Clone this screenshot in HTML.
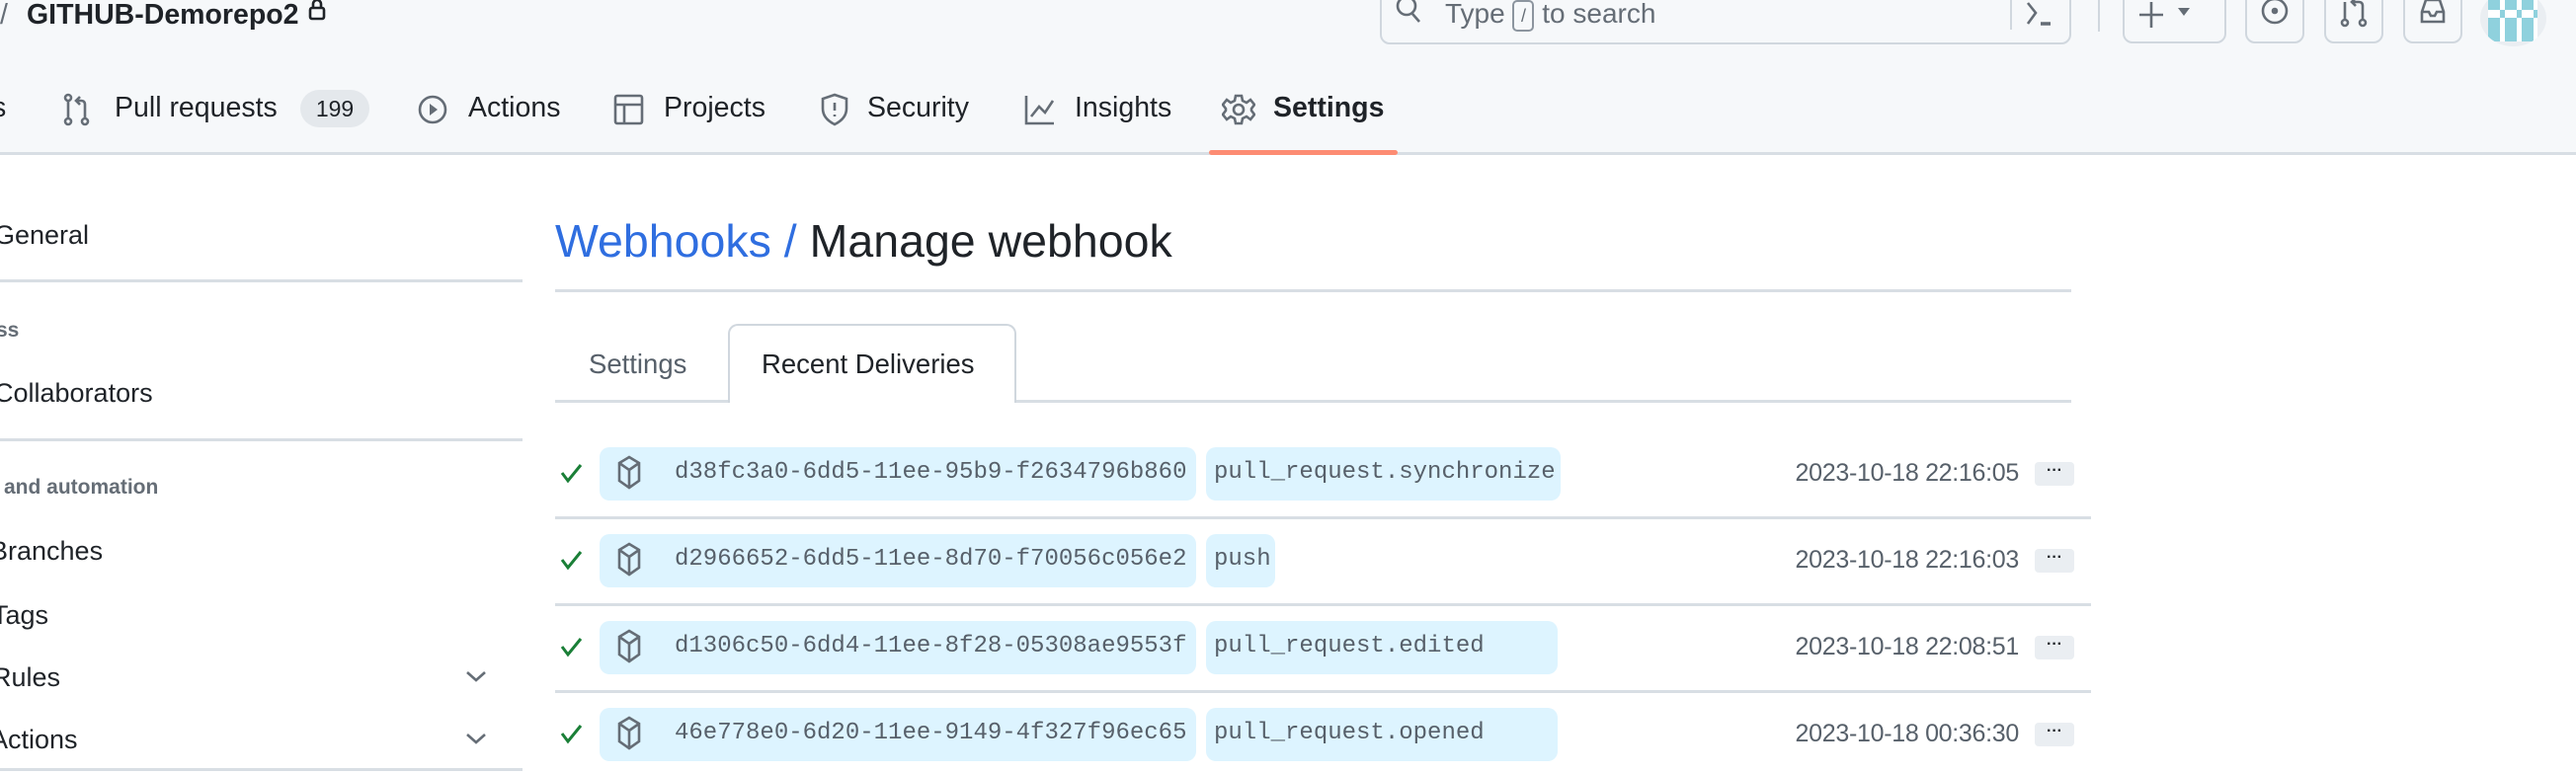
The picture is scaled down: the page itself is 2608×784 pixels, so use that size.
<!DOCTYPE html>
<html><head><meta charset="utf-8"><style>
*{box-sizing:border-box;margin:0;padding:0}
body{width:2608px;height:784px;overflow:hidden;background:#fff;font-family:"Liberation Sans",sans-serif;color:#1f2328;position:relative}
.a{position:absolute;white-space:nowrap}
.hdr{position:absolute;left:0;top:0;width:2608px;height:157px;background:#f6f8fa;border-bottom:3px solid #d8dee4}
.nav{font-size:28.5px;top:91px;line-height:36px}
.ic{position:absolute;stroke:#656d76;fill:none;stroke-width:2.6}
.btn{position:absolute;top:-10px;height:54px;border:2px solid #d0d7de;border-radius:10px;background:#f6f8fa}
.side{font-size:27px;left:-6px}
.sh{font-size:21px;font-weight:bold;color:#656d76}
.hr{position:absolute;height:3px;background:#d8dee4}
.pill{position:absolute;height:54px;background:#ddf4ff;border-radius:10px}
.mono{font-family:"Liberation Mono",monospace;font-size:24px;color:#57606a}
.date{font-size:25px;color:#57606a;letter-spacing:-0.3px}
.dots{position:absolute;width:40px;height:24px;background:#eaeef2;border-radius:4px;font-size:16px;font-weight:bold;text-align:center;line-height:18px;color:#1f2328}
</style></head><body>
<div class="hdr"></div>
<div class="a" style="left:0;top:-3px;font-size:28.5px;line-height:36px;color:#656d76">/</div>
<div class="a" style="left:27px;top:-3px;font-size:28.5px;line-height:36px;font-weight:bold">GITHUB-Demorepo2</div>
<svg class="ic" style="left:312px;top:-2px;stroke:#1f2328" width="18" height="24" viewBox="0 0 18 24"><rect x="2" y="10" width="14" height="11" rx="2"/><path d="M5 10V6a4 4 0 0 1 8 0v4"/></svg>
<!-- search -->
<div class="btn" style="left:1397px;width:700px;top:-12px;height:57px"></div>
<svg class="ic" style="left:1412px;top:-4px" width="28" height="32" viewBox="0 0 28 32"><circle cx="12" cy="10" r="9"/><path d="M18 18l7 8"/></svg>
<div class="a" style="left:1463px;top:-4px;font-size:28px;line-height:36px;color:#656d76">Type <span style="display:inline-block;border:2px solid #8c959f;border-radius:5px;font-size:18px;width:22px;height:32px;text-align:center;line-height:28px;vertical-align:middle">/</span> to search</div>
<div class="a" style="left:2035px;top:0;width:2px;height:30px;background:#d0d7de"></div>
<svg class="ic" style="left:2050px;top:0" width="30" height="28" viewBox="0 0 30 28"><path d="M3 3l8 10-8 11"/><path d="M16 24h10" stroke-width="3.5"/></svg>
<div class="a" style="left:2124px;top:0;width:2px;height:32px;background:#d0d7de"></div>
<div class="btn" style="left:2149px;width:105px"></div>
<svg class="ic" style="left:2165px;top:0" width="60" height="30" viewBox="0 0 60 30"><path d="M13 2v26M1 15h24"/><path d="M40 8h12l-6 8z" fill="#656d76" stroke="none"/></svg>
<div class="btn" style="left:2273px;width:60px"></div>
<svg class="ic" style="left:2288px;top:-4px" width="30" height="34" viewBox="0 0 30 34"><circle cx="15" cy="15" r="12"/><circle cx="15" cy="15" r="2" fill="#656d76"/></svg>
<div class="btn" style="left:2353px;width:60px"></div>
<svg class="ic" style="left:2368px;top:-4px" width="30" height="34" viewBox="0 0 30 34"><circle cx="6" cy="27" r="3"/><circle cx="24" cy="27" r="3"/><path d="M6 6v18M24 24V10q0-4-4-4h-6M17 2l-4 4 4 4"/></svg>
<div class="btn" style="left:2433px;width:60px"></div>
<svg class="ic" style="left:2448px;top:-4px" width="30" height="34" viewBox="0 0 30 34"><path d="M4 16l4-12h14l4 12v10H4z"/><path d="M4 16h7l2 4h4l2-4h7"/></svg>
<div class="a" style="left:2511px;top:-10px;width:67px;height:57px;border-radius:50%;background:#eaeef2;overflow:hidden"><div style="position:absolute;left:8px;top:8px;width:50px;height:44px;background:repeating-linear-gradient(90deg,#8fd1dd 0 12px,#fff 12px 17px)"></div><div style="position:absolute;left:8px;top:20px;width:50px;height:8px;background:repeating-linear-gradient(90deg,#fff 0 12px,#8fd1dd 12px 17px)"></div></div>
<!-- nav -->
<div class="a nav" style="left:-8px">s</div>
<svg class="ic" style="left:64px;top:94px" width="28" height="34" viewBox="0 0 28 34"><circle cx="5" cy="5" r="3"/><circle cx="5" cy="29" r="3"/><circle cx="22" cy="29" r="3"/><path d="M5 8v18M22 26V12q0-4-4-4h-4M17 4l-4 4 4 4"/></svg>
<div class="a nav" style="left:116px">Pull requests</div>
<div class="a" style="left:304px;top:91px;width:70px;height:38px;border-radius:19px;background:#e4e8ec;font-size:23px;line-height:38px;text-align:center;font-weight:500">199</div>
<svg class="ic" style="left:422px;top:94px" width="34" height="34" viewBox="0 0 34 34"><circle cx="16" cy="17" r="13"/><path d="M13 11l8 6-8 6z" fill="#656d76" stroke="none"/></svg>
<div class="a nav" style="left:474px">Actions</div>
<svg class="ic" style="left:620px;top:94px" width="34" height="34" viewBox="0 0 34 34"><rect x="3" y="3" width="27" height="28" rx="2"/><path d="M3 12h27M12 12v19"/></svg>
<div class="a nav" style="left:672px">Projects</div>
<svg class="ic" style="left:830px;top:94px" width="30" height="34" viewBox="0 0 30 34"><path d="M15 2l12 4v10c0 8-6 13-12 16C9 29 3 24 3 16V6z"/><path d="M15 10v8M15 22v2"/></svg>
<div class="a nav" style="left:878px">Security</div>
<svg class="ic" style="left:1036px;top:94px" width="34" height="34" viewBox="0 0 34 34"><path d="M3 3v28h28"/><path d="M8 24l8-10 6 6 8-12"/></svg>
<div class="a nav" style="left:1088px">Insights</div>
<svg class="ic" style="left:1237px;top:94px" width="34" height="34" viewBox="0 0 34 34"><circle cx="17" cy="17" r="5"/><path d="M14 3h6l1 5 4 2 4-3 4 5-3 4v2l3 4-4 5-4-3-4 2-1 5h-6l-1-5-4-2-4 3-4-5 3-4v-2l-3-4 4-5 4 3 4-2z"/></svg>
<div class="a nav" style="left:1289px;font-weight:bold">Settings</div>
<div class="a" style="left:1224px;top:152px;width:191px;height:5px;background:#fd8c73;border-radius:3px"></div>
<!-- sidebar -->
<div class="a side" style="top:223px">General</div>
<div class="hr" style="left:0;top:283px;width:529px"></div>
<div class="a sh" style="top:323px;left:-4px">ss</div>
<div class="a side" style="top:383px">Collaborators</div>
<div class="hr" style="left:0;top:444px;width:529px"></div>
<div class="a sh" style="top:482px;left:4px">and automation</div>
<div class="a side" style="top:543px;left:-10px">Branches</div>
<div class="a side" style="top:608px;left:-8px">Tags</div>
<div class="a side" style="top:671px;left:-8px">Rules</div>
<div class="a side" style="top:734px;left:-10px">Actions</div>
<svg class="ic" style="left:470px;top:677px" width="24" height="16" viewBox="0 0 24 16"><path d="M3 4l9 8 9-8"/></svg>
<svg class="ic" style="left:470px;top:740px" width="24" height="16" viewBox="0 0 24 16"><path d="M3 4l9 8 9-8"/></svg>
<div class="hr" style="left:0;top:778px;width:529px"></div>
<!-- main -->
<div class="a" style="left:562px;top:216px;font-size:46.5px;line-height:56px"><span style="color:#2f6ee0">Webhooks /</span> Manage webhook</div>
<div class="hr" style="left:562px;top:293px;width:1535px"></div>
<div class="hr" style="left:562px;top:405px;width:1535px"></div>
<div class="a" style="left:737px;top:328px;width:292px;height:80px;border:2px solid #d0d7de;border-bottom:none;border-radius:10px 10px 0 0;background:#fff"></div>
<div class="a" style="left:596px;top:353px;font-size:27.5px;color:#57606a">Settings</div>
<div class="a" style="left:771px;top:353px;font-size:27.5px">Recent Deliveries</div>

<div class="hr" style="left:562px;top:523px;width:1555px"></div>
<div class="hr" style="left:562px;top:611px;width:1555px"></div>
<div class="hr" style="left:562px;top:699px;width:1555px"></div>

<svg class="a" style="left:0;top:0" width="2608" height="784">
<g fill="none" stroke="#1a7f37" stroke-width="3">
<path d="M569 479l6 8 13-16"/><path d="M569 567l6 8 13-16"/><path d="M569 655l6 8 13-16"/><path d="M569 743l6 8 13-16"/>
</g></svg>
<div class="pill" style="left:607px;top:453px;width:604px"></div>
<div class="pill" style="left:1221px;top:453px;width:359px"></div>
<div class="pill" style="left:607px;top:541px;width:604px"></div>
<div class="pill" style="left:1221px;top:541px;width:70px"></div>
<div class="pill" style="left:607px;top:629px;width:604px"></div>
<div class="pill" style="left:1221px;top:629px;width:356px"></div>
<div class="pill" style="left:607px;top:717px;width:604px"></div>
<div class="pill" style="left:1221px;top:717px;width:356px"></div>
<svg class="a" style="left:0;top:0" width="2608" height="784"><g fill="none" stroke="#656d76" stroke-width="2.6">
<path id="bx" d="M637 463l10 6v18l-10 7-10-7v-18zM627 469l10 7 10-7M637 476v18"/>
<use href="#bx" y="88"/><use href="#bx" y="176"/><use href="#bx" y="264"/></g></svg>
<div class="a mono" style="left:683px;top:465px">d38fc3a0-6dd5-11ee-95b9-f2634796b860</div>
<div class="a mono" style="left:1229px;top:465px">pull_request.synchronize</div>
<div class="a mono" style="left:683px;top:553px">d2966652-6dd5-11ee-8d70-f70056c056e2</div>
<div class="a mono" style="left:1229px;top:553px">push</div>
<div class="a mono" style="left:683px;top:641px">d1306c50-6dd4-11ee-8f28-05308ae9553f</div>
<div class="a mono" style="left:1229px;top:641px">pull_request.edited</div>
<div class="a mono" style="left:683px;top:729px">46e778e0-6d20-11ee-9149-4f327f96ec65</div>
<div class="a mono" style="left:1229px;top:729px">pull_request.opened</div>
<div class="a date" style="right:564px;top:465px">2023-10-18 22:16:05</div>
<div class="a date" style="right:564px;top:553px">2023-10-18 22:16:03</div>
<div class="a date" style="right:564px;top:641px">2023-10-18 22:08:51</div>
<div class="a date" style="right:564px;top:729px">2023-10-18 00:36:30</div>
<div class="dots" style="left:2060px;top:468px">···</div>
<div class="dots" style="left:2060px;top:556px">···</div>
<div class="dots" style="left:2060px;top:644px">···</div>
<div class="dots" style="left:2060px;top:732px">···</div>
</body></html>
